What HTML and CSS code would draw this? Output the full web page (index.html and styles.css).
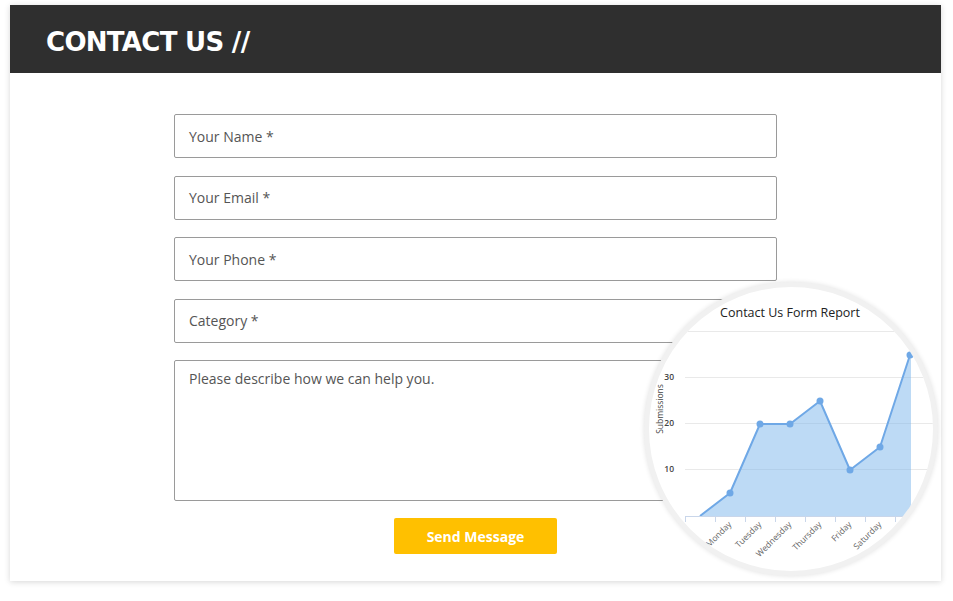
FILE: index.html
```html
<!DOCTYPE html>
<html>
<head>
<meta charset="utf-8">
<link rel="stylesheet" href="styles.css">
</head>
<body>
<div class="card">
  <header class="card-head">
    <h1 class="title">CONTACT US //</h1>
  </header>
  <form class="form">
    <div class="field">Your Name *</div>
    <div class="field">Your Email *</div>
    <div class="field">Your Phone *</div>
    <div class="field">Category *</div>
    <div class="field area">Please describe how we can help you.</div>
    <div class="actions"><button type="button" class="send">Send Message</button></div>
  </form>
  <div class="report">
    <svg class="chart" width="284" height="284" viewBox="0 0 284 284">
      <text class="chart-title" x="141" y="30" text-anchor="middle">Contact Us Form Report</text>
      <g class="grid">
        <line x1="36" y1="44.5" x2="284" y2="44.5"/>
        <line x1="36" y1="90.5" x2="284" y2="90.5"/>
        <line x1="36" y1="136.5" x2="284" y2="136.5"/>
        <line x1="36" y1="182.5" x2="284" y2="182.5"/>
      </g>
      <polygon class="area-fill" points="51,229 81,206 111,137 141,137 171,114 201,183 231,160 261,68 262,68 262,229"/>
      <polyline class="line" points="51,229 81,206 111,137 141,137 171,114 201,183 231,160 261,68"/>
      <g class="dots">
        <circle cx="81" cy="206" r="3.5"/>
        <circle cx="111" cy="137" r="3.5"/>
        <circle cx="141" cy="137" r="3.5"/>
        <circle cx="171" cy="114" r="3.5"/>
        <circle cx="201" cy="183" r="3.5"/>
        <circle cx="231" cy="160" r="3.5"/>
        <circle cx="261" cy="68" r="3.5"/>
      </g>
      <g class="axis">
        <line x1="36" y1="229.5" x2="284" y2="229.5"/>
        <line x1="36.5" y1="229" x2="36.5" y2="235"/>
        <line x1="66.5" y1="229" x2="66.5" y2="235"/>
        <line x1="96.5" y1="229" x2="96.5" y2="235"/>
        <line x1="126.5" y1="229" x2="126.5" y2="235"/>
        <line x1="156.5" y1="229" x2="156.5" y2="235"/>
        <line x1="186.5" y1="229" x2="186.5" y2="235"/>
        <line x1="216.5" y1="229" x2="216.5" y2="235"/>
        <line x1="246.5" y1="229" x2="246.5" y2="235"/>
        <line x1="276.5" y1="229" x2="276.5" y2="235"/>
      </g>
      <g class="ylab">
        <text x="25" y="93" text-anchor="end">30</text>
        <text x="25" y="139" text-anchor="end">20</text>
        <text x="25" y="185" text-anchor="end">10</text>
      </g>
      <text class="ytitle" x="0" y="0" text-anchor="middle" transform="translate(14,122) rotate(-90)">Submissions</text>
      <g class="xlab">
        <text text-anchor="end" transform="translate(83,238) rotate(-45)">Monday</text>
        <text text-anchor="end" transform="translate(113,238) rotate(-45)">Tuesday</text>
        <text text-anchor="end" transform="translate(143,238) rotate(-45)">Wednesday</text>
        <text text-anchor="end" transform="translate(173,238) rotate(-45)">Thursday</text>
        <text text-anchor="end" transform="translate(203,238) rotate(-45)">Friday</text>
        <text text-anchor="end" transform="translate(233,238) rotate(-45)">Saturday</text>
      </g>
    </svg>
  </div>
</div>
</body>
</html>
```
FILE: styles.css
```css
* { box-sizing: border-box; }
html, body { margin: 0; padding: 0; background: #ffffff; }
body { padding: 5px 12px 20px 10px; font-family: "Open Sans", "Liberation Sans", sans-serif; }

.card {
  position: relative;
  width: 931px;
  height: 576px;
  background: #fff;
  box-shadow: 0 1px 6px rgba(0,0,0,0.16);
}

.card-head {
  height: 68px;
  background: #2f2f2f;
  display: flex;
  align-items: center;
  padding: 5px 0 0 36px;
}
.title {
  margin: 0;
  color: #fff;
  font-family: "DejaVu Sans", sans-serif;
  font-weight: bold;
  font-size: 26px;
  letter-spacing: -0.7px;
}

.form {
  width: 603px;
  margin: 41px 0 0 164px;
  display: flex;
  flex-direction: column;
  gap: 17.5px;
}
.field {
  height: 44px;
  border: 1px solid #9a9a9a;
  border-radius: 2px;
  padding: 0 14px;
  display: flex;
  align-items: center;
  font-size: 14px;
  color: #555;
}
.field.area {
  height: 141px;
  align-items: flex-start;
  padding-top: 8px;
}
.actions {
  display: flex;
  justify-content: center;
  margin-top: -0.5px;
}
.send {
  width: 163px;
  height: 36px;
  border: 0;
  border-radius: 2px;
  background: #ffc000;
  color: #fff;
  font-family: "Open Sans", sans-serif;
  font-weight: bold;
  font-size: 14px;
}

.report {
  position: absolute;
  left: 634px;
  top: 277px;
  width: 294px;
  height: 294px;
  border-radius: 50%;
  border: 5px solid #f1f1f1;
  background: #fff;
  box-shadow: 0 0 5px rgba(0,0,0,0.12);
  overflow: hidden;
}
.chart { display: block; }
.chart-title { font-family: "Open Sans", sans-serif; font-size: 12.5px; fill: #222; }
.grid line { stroke: #e9e9e9; stroke-width: 1; }
.area-fill { fill: rgba(124,181,236,0.5); }
.line { fill: none; stroke: #6fa8e6; stroke-width: 2; stroke-linejoin: round; }
.dots circle { fill: #6fa8e6; }
.axis line { stroke: #c9d6ea; stroke-width: 1; }
.ylab text { font-family: "Open Sans", sans-serif; font-size: 8.5px; font-weight: 600; fill: #444; }
.ytitle { font-family: "Open Sans", sans-serif; font-size: 8.5px; fill: #444; }
.xlab text { font-family: "Open Sans", sans-serif; font-size: 8.5px; fill: #666; }
```
